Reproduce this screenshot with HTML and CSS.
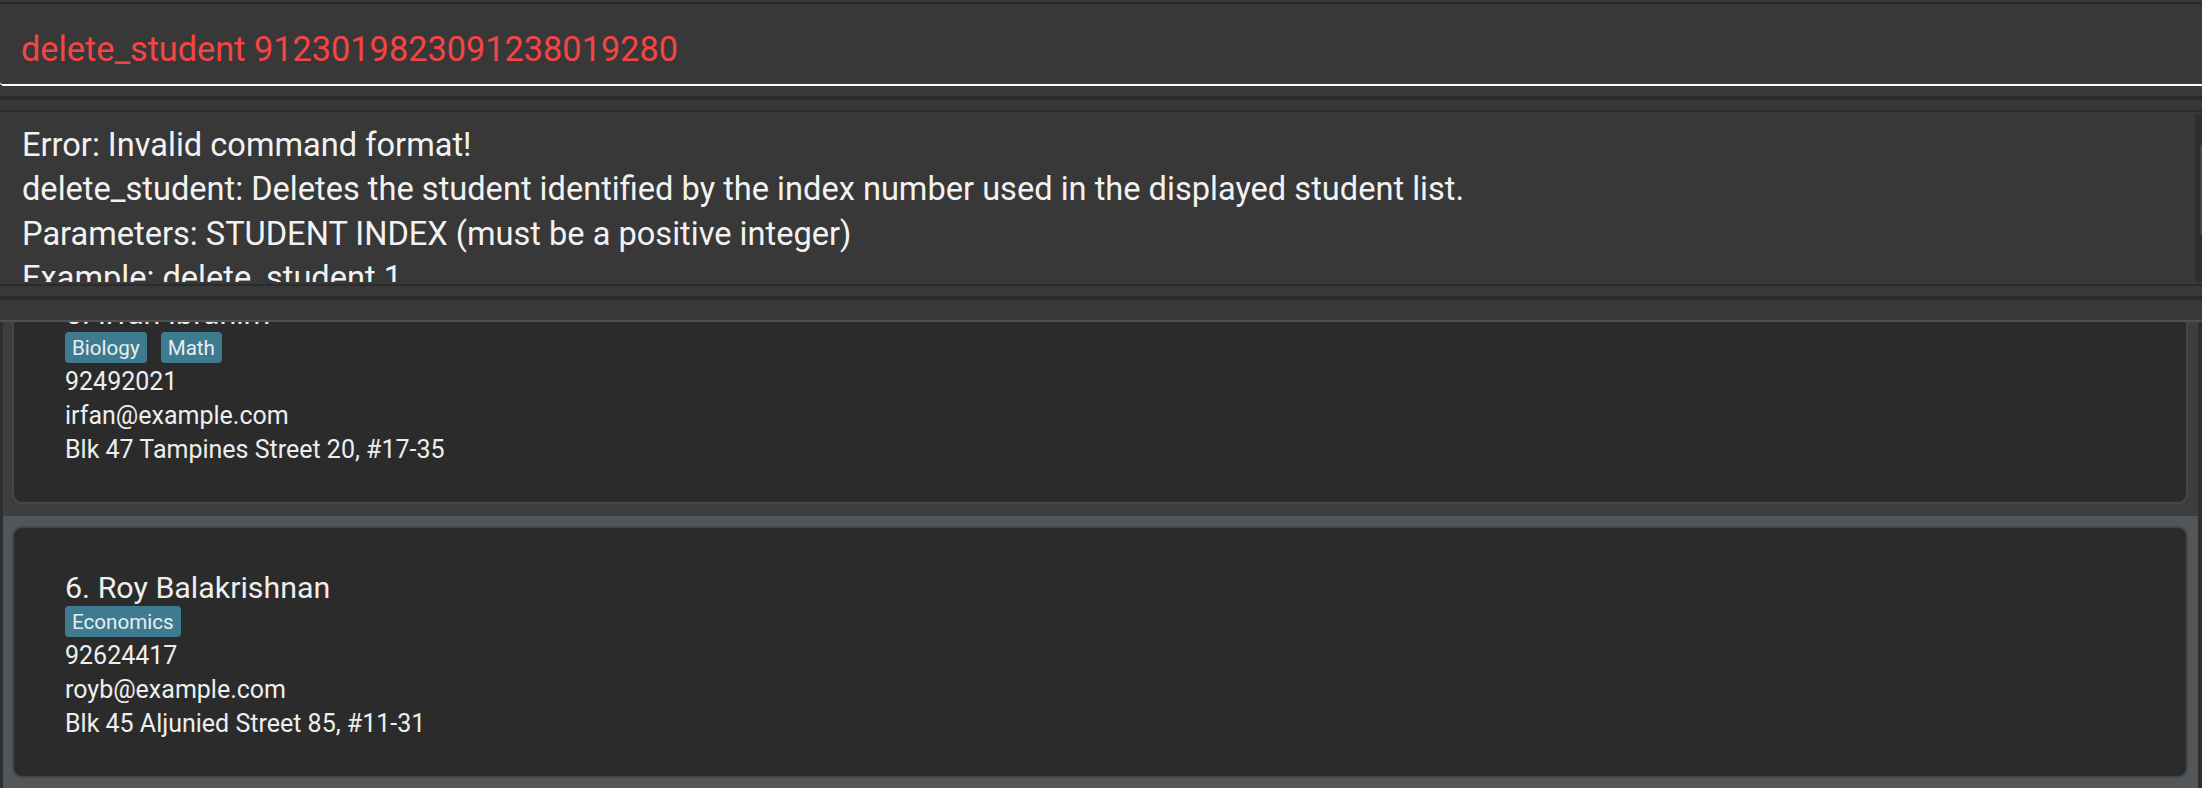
FILE: index.html
```html
<!DOCTYPE html>
<html>
<head>
<meta charset="utf-8">
<title>Student list</title>
<link rel="stylesheet" href="styles.css">
</head>
<body>
<div class="app">
  <div class="top-strip"></div>
  <div class="command-box">
    <div class="command-text">delete_student 9123019823091238019280</div>
  </div>
  <div class="band band-10"></div>
  <div class="sep"></div>
  <div class="band band-10"></div>
  <div class="result-box">
    <div class="result-text">
      <div class="result-line">Error: Invalid command format!</div>
      <div class="result-line">delete_student: Deletes the student identified by the index number used in the displayed student list.</div>
      <div class="result-line">Parameters: STUDENT INDEX (must be a positive integer)</div>
      <div class="result-line">Example: delete_student 1</div>
    </div>
    <div class="scrollbar"><div class="thumb"></div></div>
  </div>
  <div class="band band-10"></div>
  <div class="sep"></div>
  <div class="band band-20"></div>
  <div class="list-line"></div>
  <div class="list">
    <div class="list-viewport">
      <div class="list-content">
        <div class="cell cell-even">
          <div class="card">
            <div class="name">5. Irfan Ibrahim</div>
            <div class="tags">
              <span class="tag">Biology</span>
              <span class="tag">Math</span>
            </div>
            <div class="detail">92492021</div>
            <div class="detail">irfan@example.com</div>
            <div class="detail">Blk 47 Tampines Street 20, #17-35</div>
          </div>
        </div>
        <div class="cell cell-odd">
          <div class="card">
            <div class="name">6. Roy Balakrishnan</div>
            <div class="tags">
              <span class="tag">Economics</span>
            </div>
            <div class="detail">92624417</div>
            <div class="detail">royb@example.com</div>
            <div class="detail">Blk 45 Aljunied Street 85, #11-31</div>
          </div>
        </div>
      </div>
    </div>
  </div>
</div>
</body>
</html>
```

FILE: styles.css
```css
* { box-sizing: border-box; }

html, body {
  margin: 0;
  padding: 0;
  background: #2b2b2b;
  font-family: Roboto, "Liberation Sans", sans-serif;
}

.app {
  width: 2202px;
  height: 788px;
  display: flex;
  flex-direction: column;
  overflow: hidden;
}

.top-strip {
  height: 4px;
  background: #3a3a3a;
  border-bottom: 2px solid #2b2b2b;
  flex: none;
}

.command-box {
  height: 82px;
  flex: none;
  background: #383838;
  border-bottom: 2px solid #ffffff;
  border-bottom-left-radius: 4px;
  padding: 25px 0 0 21px;
}

.command-text {
  font-size: 34.3px;
  line-height: 41px;
  color: #f54444;
  white-space: nowrap;
}

.band { background: #383838; flex: none; }
.band-10 { height: 10px; }
.band-20 { height: 20px; }

.sep { height: 4px; background: #2b2b2b; flex: none; }

.result-box {
  flex: none;
  height: 176px;
  background: #383838;
  border-top: 2px solid #2b2b2b;
  border-bottom: 2px solid #2b2b2b;
  display: flex;
}

.result-text {
  flex: 1;
  height: 170px;
  overflow: hidden;
  padding: 11px 0 0 22px;
  color: #f2f2f2;
  font-size: 32.6px;
  line-height: 44.4px;
  white-space: nowrap;
}

.scrollbar {
  width: 7px;
  margin: 2px 0 2px 0;
  background: #2e2e2e;
  display: flex;
  justify-content: flex-end;
}

.thumb {
  width: 2px;
  height: 90px;
  margin-top: 31px;
  background: #444444;
}

.list-line {
  height: 2px;
  background: #505050;
  flex: none;
}

.list {
  flex: 1;
  min-height: 0;
  background: #2e2e2e;
  padding: 0 4px 0 3px;
}

.list-viewport {
  height: 100%;
  overflow: hidden;
}

.list-content {
  margin-top: -80px;
}

.cell {
  padding: 10px 10px 12px 9px;
}

.cell-even { background: #3c3e40; }
.cell-odd { background: #50565a; }

.card {
  height: 252px;
  background: #2b2b2b;
  border: 2px solid #474747;
  border-radius: 10px;
  padding: 42px 20px 0 51px;
  color: #eeeeee;
}

.name {
  font-size: 30.4px;
  line-height: 36px;
  white-space: nowrap;
}

.tags {
  display: flex;
  gap: 14px;
}

.tag {
  background: #3e7b91;
  color: #e8eef0;
  font-size: 20.6px;
  line-height: 27px;
  padding: 3px 7px 1px 7px;
  border-radius: 4px;
}

.detail {
  font-size: 25px;
  line-height: 34px;
  white-space: nowrap;
}

.tags + .detail { margin-top: 1.5px; }
```
